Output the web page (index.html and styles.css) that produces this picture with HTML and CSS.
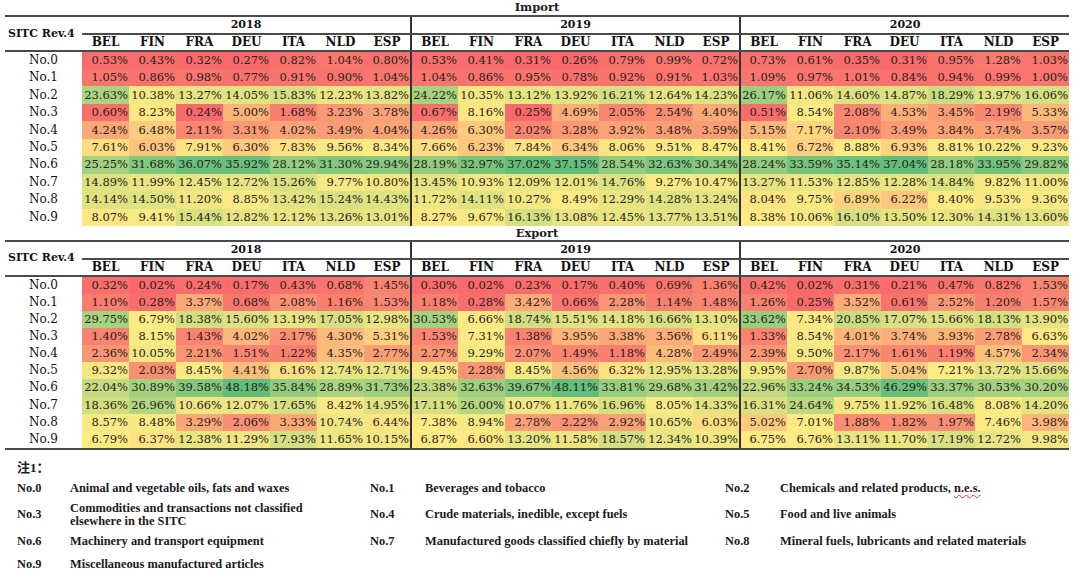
FILE: index.html
```html
<!DOCTYPE html>
<html lang="en">
<head>
<meta charset="utf-8">
<title>SITC Rev.4 Import / Export shares</title>
<link rel="stylesheet" href="styles.css">
</head>
<body>
<div class="page">
  <div class="sec-title">Import</div>
  <table class="heat imp">
    <colgroup><col class="lab"><col class="v"><col class="v"><col class="v"><col class="v"><col class="v"><col class="v"><col class="v"><col class="v"><col class="v"><col class="v"><col class="v"><col class="v"><col class="v"><col class="v"><col class="v"><col class="v"><col class="v"><col class="v"><col class="v"><col class="v"><col class="v"></colgroup>
    <thead>
      <tr class="yr"><th rowspan="2" class="sitc">SITC Rev.4</th><th colspan="7" class="yh">2018</th><th colspan="7" class="yh b">2019</th><th colspan="7" class="yh b">2020</th></tr>
      <tr class="cty"><th>BEL</th><th>FIN</th><th>FRA</th><th>DEU</th><th>ITA</th><th>NLD</th><th>ESP</th><th class="b">BEL</th><th>FIN</th><th>FRA</th><th>DEU</th><th>ITA</th><th>NLD</th><th>ESP</th><th class="b">BEL</th><th>FIN</th><th>FRA</th><th>DEU</th><th>ITA</th><th>NLD</th><th>ESP</th></tr>
    </thead>
    <tbody>
      <tr><th>No.0</th><td>0.53%</td><td>0.43%</td><td>0.32%</td><td>0.27%</td><td>0.82%</td><td>1.04%</td><td>0.80%</td><td class="b">0.53%</td><td>0.41%</td><td>0.31%</td><td>0.26%</td><td>0.79%</td><td>0.99%</td><td>0.72%</td><td class="b">0.73%</td><td>0.61%</td><td>0.35%</td><td>0.31%</td><td>0.95%</td><td>1.28%</td><td>1.03%</td></tr>
      <tr><th>No.1</th><td>1.05%</td><td>0.86%</td><td>0.98%</td><td>0.77%</td><td>0.91%</td><td>0.90%</td><td>1.04%</td><td class="b">1.04%</td><td>0.86%</td><td>0.95%</td><td>0.78%</td><td>0.92%</td><td>0.91%</td><td>1.03%</td><td class="b">1.09%</td><td>0.97%</td><td>1.01%</td><td>0.84%</td><td>0.94%</td><td>0.99%</td><td>1.00%</td></tr>
      <tr><th>No.2</th><td>23.63%</td><td>10.38%</td><td>13.27%</td><td>14.05%</td><td>15.83%</td><td>12.23%</td><td>13.82%</td><td class="b">24.22%</td><td>10.35%</td><td>13.12%</td><td>13.92%</td><td>16.21%</td><td>12.64%</td><td>14.23%</td><td class="b">26.17%</td><td>11.06%</td><td>14.60%</td><td>14.87%</td><td>18.29%</td><td>13.97%</td><td>16.06%</td></tr>
      <tr><th>No.3</th><td>0.60%</td><td>8.23%</td><td>0.24%</td><td>5.00%</td><td>1.68%</td><td>3.23%</td><td>3.78%</td><td class="b">0.67%</td><td>8.16%</td><td>0.25%</td><td>4.69%</td><td>2.05%</td><td>2.54%</td><td>4.40%</td><td class="b">0.51%</td><td>8.54%</td><td>2.08%</td><td>4.53%</td><td>3.45%</td><td>2.19%</td><td>5.33%</td></tr>
      <tr><th>No.4</th><td>4.24%</td><td>6.48%</td><td>2.11%</td><td>3.31%</td><td>4.02%</td><td>3.49%</td><td>4.04%</td><td class="b">4.26%</td><td>6.30%</td><td>2.02%</td><td>3.28%</td><td>3.92%</td><td>3.48%</td><td>3.59%</td><td class="b">5.15%</td><td>7.17%</td><td>2.10%</td><td>3.49%</td><td>3.84%</td><td>3.74%</td><td>3.57%</td></tr>
      <tr><th>No.5</th><td>7.61%</td><td>6.03%</td><td>7.91%</td><td>6.30%</td><td>7.83%</td><td>9.56%</td><td>8.34%</td><td class="b">7.66%</td><td>6.23%</td><td>7.84%</td><td>6.34%</td><td>8.06%</td><td>9.51%</td><td>8.47%</td><td class="b">8.41%</td><td>6.72%</td><td>8.88%</td><td>6.93%</td><td>8.81%</td><td>10.22%</td><td>9.23%</td></tr>
      <tr><th>No.6</th><td>25.25%</td><td>31.68%</td><td>36.07%</td><td>35.92%</td><td>28.12%</td><td>31.30%</td><td>29.94%</td><td class="b">28.19%</td><td>32.97%</td><td>37.02%</td><td>37.15%</td><td>28.54%</td><td>32.63%</td><td>30.34%</td><td class="b">28.24%</td><td>33.59%</td><td>35.14%</td><td>37.04%</td><td>28.18%</td><td>33.95%</td><td>29.82%</td></tr>
      <tr><th>No.7</th><td>14.89%</td><td>11.99%</td><td>12.45%</td><td>12.72%</td><td>15.26%</td><td>9.77%</td><td>10.80%</td><td class="b">13.45%</td><td>10.93%</td><td>12.09%</td><td>12.01%</td><td>14.76%</td><td>9.27%</td><td>10.47%</td><td class="b">13.27%</td><td>11.53%</td><td>12.85%</td><td>12.28%</td><td>14.84%</td><td>9.82%</td><td>11.00%</td></tr>
      <tr><th>No.8</th><td>14.14%</td><td>14.50%</td><td>11.20%</td><td>8.85%</td><td>13.42%</td><td>15.24%</td><td>14.43%</td><td class="b">11.72%</td><td>14.11%</td><td>10.27%</td><td>8.49%</td><td>12.29%</td><td>14.28%</td><td>13.24%</td><td class="b">8.04%</td><td>9.75%</td><td>6.89%</td><td>6.22%</td><td>8.40%</td><td>9.53%</td><td>9.36%</td></tr>
      <tr><th>No.9</th><td>8.07%</td><td>9.41%</td><td>15.44%</td><td>12.82%</td><td>12.12%</td><td>13.26%</td><td>13.01%</td><td class="b">8.27%</td><td>9.67%</td><td>16.13%</td><td>13.08%</td><td>12.45%</td><td>13.77%</td><td>13.51%</td><td class="b">8.38%</td><td>10.06%</td><td>16.10%</td><td>13.50%</td><td>12.30%</td><td>14.31%</td><td>13.60%</td></tr>
    </tbody>
  </table>

  <div class="sec-title exp-title">Export</div>
  <table class="heat exp">
    <colgroup><col class="lab"><col class="v"><col class="v"><col class="v"><col class="v"><col class="v"><col class="v"><col class="v"><col class="v"><col class="v"><col class="v"><col class="v"><col class="v"><col class="v"><col class="v"><col class="v"><col class="v"><col class="v"><col class="v"><col class="v"><col class="v"><col class="v"></colgroup>
    <thead>
      <tr class="yr"><th rowspan="2" class="sitc">SITC Rev.4</th><th colspan="7" class="yh">2018</th><th colspan="7" class="yh b">2019</th><th colspan="7" class="yh b">2020</th></tr>
      <tr class="cty"><th>BEL</th><th>FIN</th><th>FRA</th><th>DEU</th><th>ITA</th><th>NLD</th><th>ESP</th><th class="b">BEL</th><th>FIN</th><th>FRA</th><th>DEU</th><th>ITA</th><th>NLD</th><th>ESP</th><th class="b">BEL</th><th>FIN</th><th>FRA</th><th>DEU</th><th>ITA</th><th>NLD</th><th>ESP</th></tr>
    </thead>
    <tbody>
      <tr><th>No.0</th><td>0.32%</td><td>0.02%</td><td>0.24%</td><td>0.17%</td><td>0.43%</td><td>0.68%</td><td>1.45%</td><td class="b">0.30%</td><td>0.02%</td><td>0.23%</td><td>0.17%</td><td>0.40%</td><td>0.69%</td><td>1.36%</td><td class="b">0.42%</td><td>0.02%</td><td>0.31%</td><td>0.21%</td><td>0.47%</td><td>0.82%</td><td>1.53%</td></tr>
      <tr><th>No.1</th><td>1.10%</td><td>0.28%</td><td>3.37%</td><td>0.68%</td><td>2.08%</td><td>1.16%</td><td>1.53%</td><td class="b">1.18%</td><td>0.28%</td><td>3.42%</td><td>0.66%</td><td>2.28%</td><td>1.14%</td><td>1.48%</td><td class="b">1.26%</td><td>0.25%</td><td>3.52%</td><td>0.61%</td><td>2.52%</td><td>1.20%</td><td>1.57%</td></tr>
      <tr><th>No.2</th><td>29.75%</td><td>6.79%</td><td>18.38%</td><td>15.60%</td><td>13.19%</td><td>17.05%</td><td>12.98%</td><td class="b">30.53%</td><td>6.66%</td><td>18.74%</td><td>15.51%</td><td>14.18%</td><td>16.66%</td><td>13.10%</td><td class="b">33.62%</td><td>7.34%</td><td>20.85%</td><td>17.07%</td><td>15.66%</td><td>18.13%</td><td>13.90%</td></tr>
      <tr><th>No.3</th><td>1.40%</td><td>8.15%</td><td>1.43%</td><td>4.02%</td><td>2.17%</td><td>4.30%</td><td>5.31%</td><td class="b">1.53%</td><td>7.31%</td><td>1.38%</td><td>3.95%</td><td>3.38%</td><td>3.56%</td><td>6.11%</td><td class="b">1.33%</td><td>8.54%</td><td>4.01%</td><td>3.74%</td><td>3.93%</td><td>2.78%</td><td>6.63%</td></tr>
      <tr><th>No.4</th><td>2.36%</td><td>10.05%</td><td>2.21%</td><td>1.51%</td><td>1.22%</td><td>4.35%</td><td>2.77%</td><td class="b">2.27%</td><td>9.29%</td><td>2.07%</td><td>1.49%</td><td>1.18%</td><td>4.28%</td><td>2.49%</td><td class="b">2.39%</td><td>9.50%</td><td>2.17%</td><td>1.61%</td><td>1.19%</td><td>4.57%</td><td>2.34%</td></tr>
      <tr><th>No.5</th><td>9.32%</td><td>2.03%</td><td>8.45%</td><td>4.41%</td><td>6.16%</td><td>12.74%</td><td>12.71%</td><td class="b">9.45%</td><td>2.28%</td><td>8.45%</td><td>4.56%</td><td>6.32%</td><td>12.95%</td><td>13.28%</td><td class="b">9.95%</td><td>2.70%</td><td>9.87%</td><td>5.04%</td><td>7.21%</td><td>13.72%</td><td>15.66%</td></tr>
      <tr><th>No.6</th><td>22.04%</td><td>30.89%</td><td>39.58%</td><td>48.18%</td><td>35.84%</td><td>28.89%</td><td>31.73%</td><td class="b">23.38%</td><td>32.63%</td><td>39.67%</td><td>48.11%</td><td>33.81%</td><td>29.68%</td><td>31.42%</td><td class="b">22.96%</td><td>33.24%</td><td>34.53%</td><td>46.29%</td><td>33.37%</td><td>30.53%</td><td>30.20%</td></tr>
      <tr><th>No.7</th><td>18.36%</td><td>26.96%</td><td>10.66%</td><td>12.07%</td><td>17.65%</td><td>8.42%</td><td>14.95%</td><td class="b">17.11%</td><td>26.00%</td><td>10.07%</td><td>11.76%</td><td>16.96%</td><td>8.05%</td><td>14.33%</td><td class="b">16.31%</td><td>24.64%</td><td>9.75%</td><td>11.92%</td><td>16.48%</td><td>8.08%</td><td>14.20%</td></tr>
      <tr><th>No.8</th><td>8.57%</td><td>8.48%</td><td>3.29%</td><td>2.06%</td><td>3.33%</td><td>10.74%</td><td>6.44%</td><td class="b">7.38%</td><td>8.94%</td><td>2.78%</td><td>2.22%</td><td>2.92%</td><td>10.65%</td><td>6.03%</td><td class="b">5.02%</td><td>7.01%</td><td>1.88%</td><td>1.82%</td><td>1.97%</td><td>7.46%</td><td>3.98%</td></tr>
      <tr><th>No.9</th><td>6.79%</td><td>6.37%</td><td>12.38%</td><td>11.29%</td><td>17.93%</td><td>11.65%</td><td>10.15%</td><td class="b">6.87%</td><td>6.60%</td><td>13.20%</td><td>11.58%</td><td>18.57%</td><td>12.34%</td><td>10.39%</td><td class="b">6.75%</td><td>6.76%</td><td>13.11%</td><td>11.70%</td><td>17.19%</td><td>12.72%</td><td>9.98%</td></tr>
    </tbody>
  </table>

  <div class="note">
    <div class="note-title">注1：</div>
    <div class="legend">
      <span>No.0</span><span>Animal and vegetable oils, fats and waxes</span>
      <span>No.1</span><span>Beverages and tobacco</span>
      <span>No.2</span><span>Chemicals and related products, <span class="sp">n.e.s.</span></span>
      <span>No.3</span><span>Commodities and transactions not classified<br>elsewhere in the SITC</span>
      <span>No.4</span><span>Crude materials, inedible, except fuels</span>
      <span>No.5</span><span>Food and live animals</span>
      <span>No.6</span><span>Machinery and transport equipment</span>
      <span>No.7</span><span>Manufactured goods classified chiefly by material</span>
      <span>No.8</span><span>Mineral fuels, lubricants and related materials</span>
      <span class="last">No.9</span><span class="last">Miscellaneous manufactured articles</span>
    </div>
  </div>
</div>
<script src="script.js"></script>
</body>
</html>
```

FILE: styles.css
```css
* { box-sizing: border-box; }

body {
  margin: 0;
  background: #ffffff;
  font-family: "DejaVu Serif", "Liberation Serif", serif;
  color: #1d1d1d;
}

.page {
  width: 1080px;
  padding-left: 5px;
}

.sec-title {
  width: 1064px;
  height: 15px;
  line-height: 15px;
  text-align: center;
  font-weight: bold;
  font-size: 11.5px;
}

.exp-title {
  height: 14px;
  line-height: 14px;
}

.heat {
  border-collapse: collapse;
  table-layout: fixed;
  width: 1064px;
}

.heat col.lab { width: 77px; }
.heat col.v { width: 47px; }

.heat th {
  padding: 0;
  font-weight: bold;
  color: #111;
}

.heat tr.yr th {
  border-top: 2px solid #4a4a4a;
  height: 18px;
  font-size: 11px;
  line-height: 16px;
}

.heat th.yh { border-bottom: 2px solid #4a4a4a; }

.heat tr.cty th {
  height: 17px;
  font-size: 12px;
  line-height: 15px;
  border-bottom: 2px solid #4a4a4a;
}

.heat th.sitc {
  text-align: left;
  padding-left: 3px;
  font-size: 11.5px;
  border-bottom: 2px solid #4a4a4a;
  white-space: nowrap;
}

.heat .b { border-left: 2px solid #333; }

.heat tbody th {
  font-weight: normal;
  font-size: 12px;
  text-align: center;
  line-height: 17px;
}

.heat td {
  text-align: right;
  padding: 0 1px 0 0;
  font-size: 11.5px;
  line-height: 17px;
  white-space: nowrap;
  color: #1d1d1d;
}

.heat.imp tbody th,
.heat.imp td { height: 17.45px; }

.heat.exp tbody th,
.heat.exp td { height: 17.1px; }

.heat.exp tbody tr:last-child > * { border-bottom: 2px solid #4a4a4a; }

.note {
  margin: 10px 0 0 12px;
  font-family: "Liberation Serif", "Noto Sans CJK SC", serif;
  font-weight: bold;
  color: #1a1a1a;
}

.note-title {
  font-size: 13px;
  line-height: 16px;
  font-family: "Liberation Serif", "Noto Sans CJK SC", sans-serif;
}

.legend {
  margin-top: 6px;
  display: grid;
  grid-template-columns: 53px 300px 55px 300px 55px 1fr;
  row-gap: 7px;
  align-items: center;
  font-size: 12.4px;
  line-height: 13px;
}

.legend .last { margin-top: 3px; }

.sp {
  text-decoration: underline wavy #e03030;
  text-decoration-thickness: 1px;
  text-underline-offset: 2px;
}
```

FILE: script.js
```js
(function () {
  var lo = [248, 105, 107], mid = [255, 235, 132], hi = [99, 190, 123];
  function mix(a, b, t) {
    return 'rgb(' + a.map(function (v, i) { return Math.round(v + (b[i] - v) * t); }).join(',') + ')';
  }
  document.querySelectorAll('table.heat').forEach(function (tbl) {
    var cells = Array.prototype.slice.call(tbl.querySelectorAll('tbody td'));
    var vals = cells.map(function (c) { return parseFloat(c.textContent); });
    var s = vals.slice().sort(function (a, b) { return a - b; });
    var min = s[0], max = s[s.length - 1];
    var p = (s.length - 1) * 0.5, f = Math.floor(p);
    var med = s[f] + (s[Math.min(f + 1, s.length - 1)] - s[f]) * (p - f);
    cells.forEach(function (c, i) {
      var v = vals[i], col;
      if (v <= med) col = mix(lo, mid, (v - min) / (med - min));
      else col = mix(mid, hi, (v - med) / (max - med));
      c.style.backgroundColor = col;
    });
  });
})();
```
